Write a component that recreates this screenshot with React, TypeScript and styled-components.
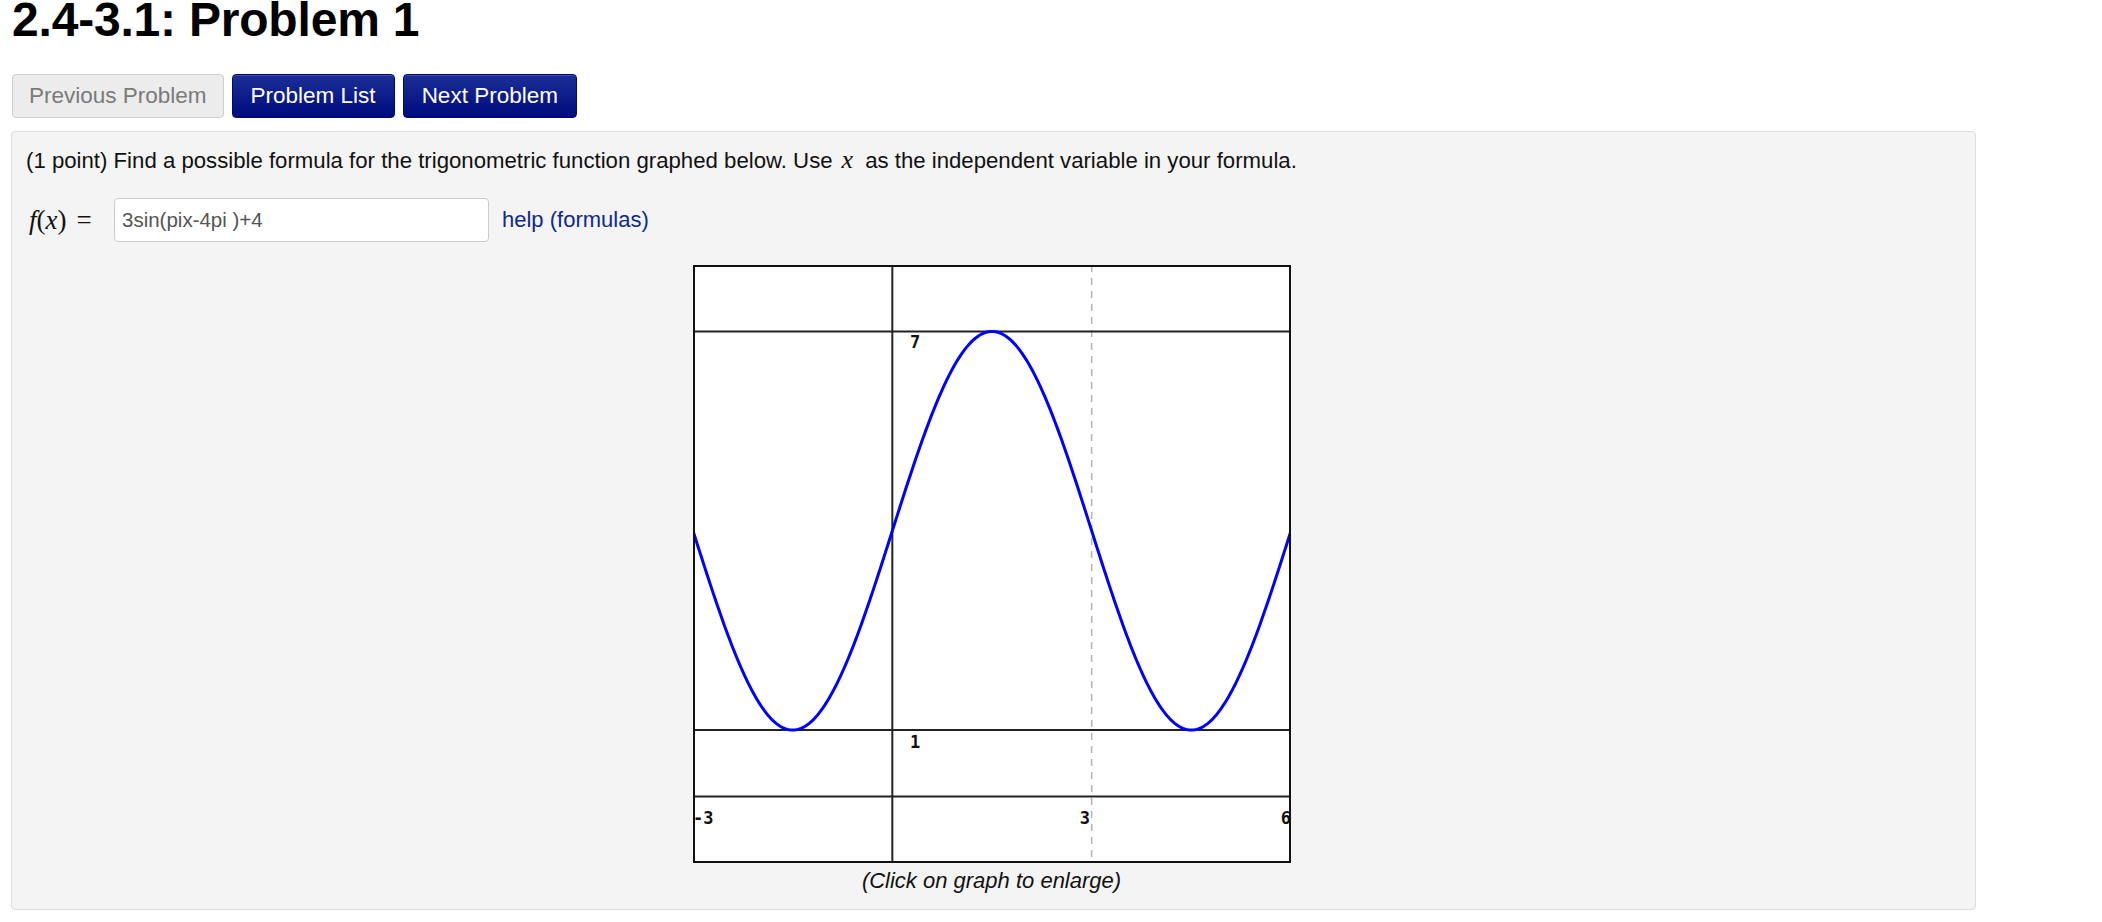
import React from 'react';
import styled, { createGlobalStyle } from 'styled-components';

const GlobalStyle = createGlobalStyle`
  html, body {
    margin: 0;
    padding: 0;
    background: #ffffff;
  }
  body {
    font-family: 'Liberation Sans', Arial, Helvetica, sans-serif;
    color: #111;
  }
`;

const Page = styled.div`
  padding: 0 0 0 11px;
`;

const Title = styled.h1`
  margin: -4px 0 0 1px;
  font-size: 48px;
  line-height: 47px;
  font-weight: bold;
  letter-spacing: -0.2px;
  color: #000;
`;

const NavBar = styled.div`
  display: flex;
  gap: 8px;
  margin: 31px 0 13px 1px;
`;

const NavButton = styled.button<{ $primary?: boolean }>`
  height: 44px;
  padding: 0 ${p => (p.$primary ? 18 : 16)}px;
  font-family: 'Liberation Sans', Arial, sans-serif;
  font-size: 22.5px;
  border-radius: 4px;
  cursor: pointer;
  border: 1px solid ${p => (p.$primary ? '#000a6a' : '#cfcfcf')};
  color: ${p => (p.$primary ? '#ffffff' : '#7a7a7a')};
  background: ${p =>
    p.$primary ? 'linear-gradient(#1b2f98, #000a7c)' : '#ececec'};
  box-shadow: ${p => (p.$primary ? 'inset 0 1px 0 rgba(255,255,255,0.15)' : 'none')};
`;

const ProblemPanel = styled.div`
  box-sizing: border-box;
  width: 1965px;
  background: #f4f4f4;
  border: 1px solid #dddddd;
  border-radius: 4px;
  padding: 13px 14px 13px 14px;
`;

const Statement = styled.p`
  margin: 0;
  font-size: 22.2px;
  line-height: 30px;
  color: #111;
`;

const MathVar = styled.span`
  font-family: 'Liberation Serif', 'DejaVu Serif', serif;
  font-style: italic;
  font-size: 26px;
  margin: 0 12px 0 9px;
`;

const AnswerRow = styled.div`
  display: flex;
  align-items: center;
  margin-top: 22px;
`;

const MathLabel = styled.span`
  flex: none;
  display: flex;
  align-items: center;
  font-family: 'Liberation Serif', 'DejaVu Serif', serif;
  font-size: 27px;
  width: 88px;
  padding-left: 3px;
  box-sizing: border-box;
  i {
    font-style: italic;
  }
`;

const Equals = styled.span`
  margin-left: 10px;
`;

const AnswerInput = styled.input`
  flex: none;
  box-sizing: border-box;
  width: 375px;
  height: 44px;
  padding: 0 7px;
  font-family: 'Liberation Sans', Arial, sans-serif;
  font-size: 20.5px;
  color: #555;
  background: #fff;
  border: 1px solid #cccccc;
  border-radius: 4px;
  outline: none;
`;

const HelpLink = styled.a`
  margin-left: 13px;
  font-size: 22px;
  color: #0f2a8c;
  text-decoration: none;
`;

const GraphBlock = styled.div`
  display: flex;
  flex-direction: column;
  align-items: center;
  margin-top: 23px;
  padding-right: 4px;
`;

const GraphSvg = styled.svg`
  display: block;
  background: #fff;
  cursor: pointer;
`;

const Caption = styled.div`
  font-size: 22px;
  font-style: italic;
  line-height: 30px;
  margin-top: 3px;
  color: #111;
`;

const SIZE = 598;
const xPx = (x: number) => ((x + 3) * SIZE) / 9;
const yPx = (y: number) => ((8 - y) * SIZE) / 9;

const curve = Array.from({ length: 361 }, (_, i) => {
  const x = -3 + (i * 9) / 360;
  const y = 3 * Math.sin((Math.PI * x) / 3) + 4;
  return `${xPx(x).toFixed(2)},${yPx(y).toFixed(2)}`;
}).join(' ');

const Graph: React.FC = () => (
  <GraphSvg width={SIZE} height={SIZE} viewBox={`0 0 ${SIZE} ${SIZE}`}>
    <line x1={xPx(3)} y1={0} x2={xPx(3)} y2={SIZE} stroke="#b5b5b5" strokeWidth={1.5} strokeDasharray="7 6" />
    <line x1={0} y1={yPx(7)} x2={SIZE} y2={yPx(7)} stroke="#222" strokeWidth={2} />
    <line x1={0} y1={yPx(1)} x2={SIZE} y2={yPx(1)} stroke="#222" strokeWidth={2} />
    <line x1={0} y1={yPx(0)} x2={SIZE} y2={yPx(0)} stroke="#222" strokeWidth={2} />
    <line x1={xPx(0)} y1={0} x2={xPx(0)} y2={SIZE} stroke="#222" strokeWidth={2} />
    <polyline points={curve} fill="none" stroke="#0000ff" strokeWidth={3} />
    <g fontFamily="'DejaVu Sans Mono', 'Liberation Mono', monospace" fontWeight="bold" fontSize={17} fill="#111">
      <text x={217} y={83}>7</text>
      <text x={217} y={483}>1</text>
      <text x={0} y={559}>-3</text>
      <text x={397} y={559} textAnchor="end">3</text>
      <text x={598} y={559} textAnchor="end">6</text>
    </g>
    <rect x={1} y={1} width={SIZE - 2} height={SIZE - 2} fill="none" stroke="#111" strokeWidth={2} />
  </GraphSvg>
);

const App: React.FC = () => (
  <Page>
    <GlobalStyle />
    <Title>2.4-3.1: Problem 1</Title>
    <NavBar>
      <NavButton>Previous Problem</NavButton>
      <NavButton $primary>Problem List</NavButton>
      <NavButton $primary>Next Problem</NavButton>
    </NavBar>
    <ProblemPanel>
      <Statement>
        (1 point) Find a possible formula for the trigonometric function graphed below. Use
        <MathVar>x</MathVar>as the independent variable in your formula.
      </Statement>
      <AnswerRow>
        <MathLabel>
          <i>f</i>(<i>x</i>)<Equals>=</Equals>
        </MathLabel>
        <AnswerInput defaultValue="3sin(pix-4pi )+4" />
        <HelpLink href="#">help (formulas)</HelpLink>
      </AnswerRow>
      <GraphBlock>
        <Graph />
        <Caption>(Click on graph to enlarge)</Caption>
      </GraphBlock>
    </ProblemPanel>
  </Page>
);

export default App;
